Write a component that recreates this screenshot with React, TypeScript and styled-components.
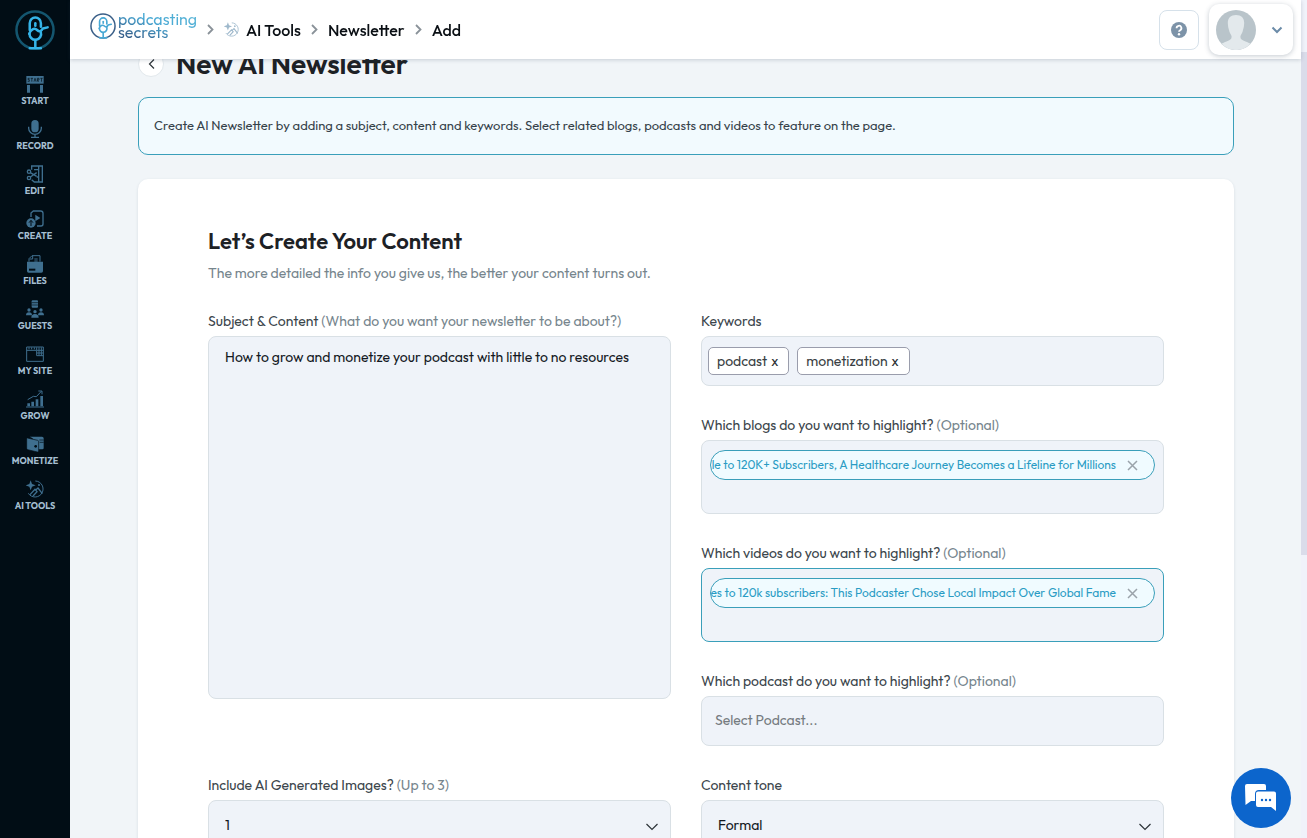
import React from "react";
import styled, { createGlobalStyle, css } from "styled-components";

const GlobalStyle = createGlobalStyle`
  *, *::before, *::after { box-sizing: border-box; }
  body { margin: 0; background: #f1f5f8; }
  body, button, input, select, textarea {
    font-family: Outfit, Lato, "Open Sans", sans-serif;
  }
  button { cursor: pointer; }
  h1, h2, p { margin: 0; }
`;

const accent = "#3a9fba";

const Shell = styled.div`
  display: grid;
  grid-template-columns: 70px minmax(0, 1fr) 6px;
  height: 100vh;
  overflow: hidden;
  color: #1d2125;
`;

/* Sidebar */

const Sidebar = styled.nav`
  display: flex;
  flex-direction: column;
  align-items: center;
  padding-top: 10px;
  background: #010d15;
`;

const SidebarLogo = styled.a`
  display: block;
  height: 40px;
  margin-bottom: 24px;
`;

const NavList = styled.ul`
  width: 100%;
  margin: 0;
  padding: 0;
  list-style: none;
`;

const NavLink = styled.a`
  display: flex;
  flex-direction: column;
  align-items: center;
  gap: 2px;
  height: 45px;
  padding-top: 1px;
  color: #a5bfd1;
  font-size: 9px;
  font-weight: 700;
  line-height: 12px;
  text-decoration: none;
  text-transform: uppercase;
  white-space: nowrap;

  svg { color: #3f6f8f; }
`;

/* Header */

const Column = styled.div`
  display: flex;
  flex-direction: column;
  min-width: 0;
  height: 100vh;
`;

const Header = styled.header`
  position: relative;
  z-index: 2;
  display: flex;
  flex: none;
  align-items: center;
  justify-content: space-between;
  height: 59px;
  padding: 0 8px 0 20px;
  background: #fff;
  box-shadow: 0 1px 4px rgba(50, 70, 90, 0.22);
`;

const HeaderSide = styled.div`
  display: flex;
  align-items: center;
  gap: 10px;
`;

const Brand = styled.a`
  display: flex;
  align-items: center;
  gap: 2px;
  padding-bottom: 8px;
  text-decoration: none;
`;

const BrandText = styled.span`
  display: flex;
  flex-direction: column;
  padding: 2px 0 1px;
  background: linear-gradient(20deg, #35608c 15%, #48a8d4 55%, #5cb8d8);
  background-clip: text;
  color: transparent;
  font-size: 16px;
  line-height: 13px;
`;

const Crumbs = styled.ol`
  display: flex;
  align-items: center;
  gap: 10px;
  margin: 0;
  padding: 0;
  list-style: none;
  font-size: 16px;
  font-weight: 500;
  line-height: 20px;

  li { display: flex; align-items: center; gap: 10px; }
`;

const CrumbLink = styled.a`
  display: flex;
  align-items: center;
  gap: 7px;
  color: #0a0f14;
  text-decoration: none;
`;

const HelpButton = styled.button`
  display: grid;
  place-items: center;
  width: 40px;
  height: 40px;
  padding: 0;
  border: 1px solid #d6e1ea;
  border-radius: 8px;
  background: #fff;
`;

const AccountButton = styled.button`
  display: flex;
  align-items: center;
  justify-content: space-between;
  width: 84px;
  height: 51px;
  padding: 0 10px 0 7px;
  border: 0;
  border-radius: 10px;
  background: #fff;
  box-shadow: 0 1px 5px rgba(60, 80, 100, 0.3);
`;

/* Page */

const Scroller = styled.main`
  flex: 1;
  min-height: 0;
  padding: 0 67px 40px 68px;
  overflow-y: auto;
  scrollbar-width: none;
  background: #f1f5f8;
`;

const TitleRow = styled.div`
  display: flex;
  align-items: center;
  gap: 12px;
  height: 36px;
  margin: -13px 0 15px;
`;

const BackButton = styled.button`
  display: grid;
  place-items: center;
  width: 26px;
  height: 26px;
  padding: 0;
  border: 1px solid #e2e8ec;
  border-radius: 50%;
  background: #fff;
`;

const PageTitle = styled.h1`
  font-size: 28px;
  font-weight: 600;
  line-height: 36px;
`;

const Notice = styled.p`
  padding: 17px 15px 19px;
  border: 1px solid ${accent};
  border-radius: 10px;
  background: #f2fafe;
  color: #36424a;
  font-size: 13px;
  line-height: 20px;
`;

const Card = styled.section`
  margin-top: 24px;
  padding: 48px 70px;
  border-radius: 10px;
  background: #fff;
  box-shadow: 0 1px 3px rgba(50, 70, 90, 0.14);
`;

const CardTitle = styled.h2`
  font-size: 22px;
  font-weight: 600;
  line-height: 28px;
`;

const CardText = styled.p`
  margin: 8px 0 28px;
  color: #76858d;
  font-size: 14px;
  line-height: 20px;
`;

const FormGrid = styled.form`
  display: grid;
  grid-template-columns: repeat(2, minmax(0, 1fr));
  gap: 29px 30px;
  align-items: start;
`;

const Stack = styled.div`
  display: grid;
  gap: 29px;
`;

const Field = styled.div`
  display: flex;
  flex-direction: column;
  gap: 5px;
  min-width: 0;
`;

const Label = styled.label`
  color: #3b454b;
  font-size: 14px;
  line-height: 20px;

  span { color: #76858d; }
`;

const boxStyle = css`
  width: 100%;
  border: 1px solid #d9e0e5;
  border-radius: 8px;
  background: #eff3f9;
  color: #14191f;
  font-size: 14px;
  line-height: 20px;
`;

const TextArea = styled.textarea`
  ${boxStyle}
  height: 363px;
  padding: 10px 16px;
  resize: none;
  outline: 0;
`;

const TextBox = styled.input`
  ${boxStyle}
  height: 50px;
  padding: 0 13px 2px;
  &::placeholder { color: #757b80; }
`;

const SelectWrap = styled.div`
  position: relative;

  svg {
    position: absolute;
    top: 22px;
    right: 12px;
    pointer-events: none;
  }
`;

const Select = styled.select`
  ${boxStyle}
  height: 50px;
  padding: 0 16px;
  appearance: none;
`;

const TagBox = styled.div`
  ${boxStyle}
  display: flex;
  align-items: center;
  gap: 8px;
  height: 50px;
  padding: 0 6px;
`;

const Tag = styled.span`
  display: flex;
  align-items: center;
  gap: 4px;
  height: 28px;
  padding: 0 10px 0 8px;
  border: 1px solid #9a9dac;
  border-radius: 5px;
  background: #fff;
  color: #3a3f44;
  white-space: nowrap;
`;

const PlainButton = styled.button`
  display: flex;
  flex: none;
  padding: 0;
  border: 0;
  background: none;
  color: #2b3034;
  font-size: 14px;
  line-height: 20px;
`;

const BareInput = styled.input`
  flex: 1;
  min-width: 0;
  padding: 0;
  border: 0;
  outline: 0;
  background: none;
  font-size: 14px;
`;

const PickerBox = styled.div<{ $active?: boolean }>`
  ${boxStyle}
  display: flex;
  flex-direction: column;
  height: 74px;
  padding: 9px 8px;
  ${(p) => p.$active && css`border-color: ${accent};`}
`;

const Pill = styled.div`
  display: flex;
  flex: none;
  align-items: center;
  justify-content: flex-end;
  gap: 11px;
  height: 30px;
  padding-right: 16px;
  overflow: hidden;
  border: 1px solid ${accent};
  border-radius: 15px;
  background: #f0fbff;
  color: #2a9cc4;
  font-size: 12px;
  white-space: nowrap;
`;

/* Overlays and scrollbar */

const Track = styled.div`
  background: #f0f2fa;
`;

const Thumb = styled.div`
  height: 60%;
  margin-top: 52px;
  background: #dadcea;
`;

const ChatButton = styled.button`
  position: fixed;
  right: 16px;
  bottom: 10px;
  z-index: 3;
  display: grid;
  place-items: center;
  width: 60px;
  height: 60px;
  padding: 0;
  border: 0;
  border-radius: 50%;
  background: #0c65cc;
`;

/* Drawings */

const MicMark = ({ size, ring, main, ringWidth }: { size: number; ring: string; main: string; ringWidth: number }) => (
  <svg width={size} height={size} viewBox="0 0 38 38" fill="none" aria-hidden="true">
    <circle cx="19" cy="19" r="17.6" stroke={ring} strokeWidth={ringWidth} />
    <g stroke={main} strokeWidth="2.400" strokeLinecap="round" strokeLinejoin="round">
      <path d="M14 19v-6.500a5.300 5.300 0 0 1 10.600 0V16" />
      <path d="M19.300 12.500v2.500" />
      <path d="M13.500 22.500c1-4 5-6 7.500-3.500s4 1 5.500-1.500l4.500-1" />
      <path d="M13.800 22.500a5.500 5.500 0 1 0 10.700-1.500" />
      <path d="M19.300 28.500V36M14 36.300h10.600" />
    </g>
  </svg>
);

const NavSvg = ({ children }: { children: React.ReactNode }) => (
  <svg width="18" height="18" viewBox="0 0 54 54" fill="none" stroke="currentColor" strokeWidth="3" aria-hidden="true">
    {children}
  </svg>
);

const StartIcon = () => (
  <NavSvg>
    <path d="M1 3h52v23H1z" fill="currentColor" stroke="none" />
    <path d="M11 10H6v4h4v5H5M14 10h7M17.500 10v10M24 20l3-10 3 10M34 20V10h5v5h-5l5 5M43 10h7M46.500 10v10" stroke="#010d15" strokeWidth="2" />
    <path d="M3 30h9v23H3zM42 30h9v23h-9z" fill="currentColor" stroke="none" />
  </NavSvg>
);
const RecordIcon = () => (
  <NavSvg>
    <rect x="16" y="0" width="22" height="37" rx="11" fill="currentColor" stroke="none" />
    <path d="M8 20v5a19 18 0 0 0 38 0v-5M27 43v9M15 52h24" strokeWidth="4" />
  </NavSvg>
);
const EditIcon = () => (
  <NavSvg>
    <path d="M17 14V3h32v48H25l-8-7M38 3v48M24 14h14M32 36h6" strokeWidth="4" />
    <circle cx="9" cy="20" r="5" strokeWidth="4" />
    <circle cx="9" cy="39" r="5" strokeWidth="4" />
    <path d="M13 23l19 11M13 36l19-13" strokeWidth="4" />
  </NavSvg>
);
const CreateIcon = () => (
  <NavSvg>
    <path d="M15 21V9l7-6h22q7 0 7 7v32q0 6-6 6H33" strokeWidth="4" />
    <path d="M28 14l15 10-15 10z" fill="currentColor" stroke="none" />
    <circle cx="15" cy="39" r="14" fill="currentColor" stroke="none" />
    <path d="M15 48V32M9 38l6-7 6 7" stroke="#010d15" />
  </NavSvg>
);
const FilesIcon = () => (
  <NavSvg>
    <path d="M3 20h48v28q0 5-5 5H8q-5 0-5-5z" fill="currentColor" stroke="none" />
    <path d="M9 20v-9l9-9h24v18M20 3v9h-9M25 12h10M25 18h10" />
    <path d="M9 41h19v6H9z" fill="#010d15" stroke="none" />
  </NavSvg>
);
const GuestsIcon = () => (
  <NavSvg>
    <g fill="currentColor" stroke="none">
      <rect x="17" y="1" width="19" height="22" rx="3" />
      <circle cx="9" cy="30" r="5" />
      <circle cx="45" cy="30" r="5" />
      <circle cx="27" cy="35" r="5" />
      <path d="M0 46q0-9 9-9t9 9zM36 46q0-9 9-9t9 9zM16 53q0-11 11-11t11 11z" />
    </g>
    <path d="M17 8h19M17 15h19" stroke="#010d15" strokeWidth="2" />
  </NavSvg>
);
const SiteIcon = () => (
  <NavSvg>
    <path d="M2 6h50v43H2zM2 16h28M9 7v6M17 7v6M25 7v6M32 7v25h20M32 16h20M32 24h20M39 7v25M46 7v25" />
  </NavSvg>
);
const GrowIcon = () => (
  <NavSvg>
    <path d="M0 51h54" />
    <path d="M4 40h8v9H4zM16 35h8v14h-8zM29 28h8v21h-8zM43 18h8v31h-8z" fill="currentColor" stroke="none" />
    <path d="M5 29l17-10 9 1L46 4M37 3h11v10" />
  </NavSvg>
);
const MonetizeIcon = () => (
  <NavSvg>
    <path d="M11 5h37q5 0 5 5v30q0 3-4 3H20V10z" fill="currentColor" stroke="none" />
    <path d="M4 9l31 7q3 1 3 4v28q0 4-4 3L5 44q-3-1-3-4V11z" fill="currentColor" stroke="#010d15" strokeWidth="2" strokeLinejoin="round" />
    <path d="M40 15h13M41 22h12" stroke="#010d15" strokeWidth="2" />
    <circle cx="29" cy="34" r="4" fill="#010d15" stroke="none" />
  </NavSvg>
);
const AiShapes = () => (
  <>
    <path d="M28 3a24 24 0 1 1-21 37" />
    <path d="M14 1l4 11 11 4-11 4-4 11-4-11-11-4 11-4z" fill="currentColor" stroke="none" />
    <path d="M12 44l15-16 6 7-12 13M30 29l6-5 13 17" strokeWidth="4" />
    <circle cx="39" cy="15" r="3" fill="currentColor" stroke="none" />
  </>
);

const navItems: [string, () => React.JSX.Element][] = [
  ["Start", StartIcon],
  ["Record", RecordIcon],
  ["Edit", EditIcon],
  ["Create", CreateIcon],
  ["Files", FilesIcon],
  ["Guests", GuestsIcon],
  ["My Site", SiteIcon],
  ["Grow", GrowIcon],
  ["Monetize", MonetizeIcon],
  ["AI Tools", () => <NavSvg><AiShapes /></NavSvg>],
];

const CrumbArrow = () => (
  <svg width="7" height="11" viewBox="0 0 7 11" fill="none" stroke="#8a9299" strokeWidth="1.800" aria-hidden="true">
    <path d="M1 1l4.500 4.500L1 10" />
  </svg>
);

const SelectArrow = () => (
  <svg width="14" height="10" viewBox="0 0 14 10" fill="none" stroke="#2c3338" strokeWidth="1.200" aria-hidden="true">
    <path d="M1.500 2L7 7.500l5.500-5.500" />
  </svg>
);

const CloseMark = () => (
  <svg width="11" height="11" viewBox="0 0 11 11" fill="none" stroke="#9aa3aa" strokeWidth="1.500" aria-hidden="true">
    <path d="M1 1l9 9M10 1l-9 9" />
  </svg>
);

const Picker = ({ id, topic, item, active }: { id: string; topic: string; item: string; active?: boolean }) => (
  <Field>
    <Label htmlFor={id}>Which {topic} do you want to highlight? <span>(Optional)</span></Label>
    <PickerBox $active={active}>
      <Pill>
        {item}
        <PlainButton type="button" aria-label="Remove"><CloseMark /></PlainButton>
      </Pill>
      <BareInput id={id} />
    </PickerBox>
  </Field>
);

export default function App() {
  return (
    <>
      <GlobalStyle />
      <Shell>
        <Sidebar aria-label="Main">
          <SidebarLogo href="#" aria-label="Home">
            <MicMark size={40} ring="#14566f" main="#35b4e8" ringWidth={2.4} />
          </SidebarLogo>
          <NavList>
            {navItems.map(([name, Icon]) => (
              <li key={name}>
                <NavLink href="#"><Icon />{name}</NavLink>
              </li>
            ))}
          </NavList>
        </Sidebar>

        <Column>
          <Header>
            <HeaderSide>
              <Brand href="#">
                <MicMark size={26} ring="#3a5f88" main="#48a8d4" ringWidth={2.2} />
                <BrandText>
                  <span>podcasting</span>
                  <span>secrets</span>
                </BrandText>
              </Brand>
              <Crumbs>
                <li>
                  <CrumbArrow />
                  <CrumbLink href="#">
                    <svg width="15" height="15" viewBox="0 0 54 54" fill="none" stroke="#9fb9cc" strokeWidth="3" color="#9fb9cc" aria-hidden="true">
                      <AiShapes />
                    </svg>
                    AI Tools
                  </CrumbLink>
                </li>
                <li><CrumbArrow /><CrumbLink href="#">Newsletter</CrumbLink></li>
                <li><CrumbArrow /><CrumbLink href="#">Add</CrumbLink></li>
              </Crumbs>
            </HeaderSide>
            <HeaderSide>
              <HelpButton aria-label="Help">
                <svg width="16" height="16" viewBox="0 0 16 16" fill="none" aria-hidden="true">
                  <circle cx="8" cy="8" r="8" fill="#7d93a8" />
                  <path d="M5.600 6.200a2.400 2.400 0 1 1 3.600 2C8.300 8.700 8 9 8 9.800" stroke="#fff" strokeWidth="1.800" />
                  <circle cx="8" cy="12.200" r="1.200" fill="#fff" />
                </svg>
              </HelpButton>
              <AccountButton aria-label="Account">
                <svg width="40" height="40" viewBox="0 0 40 40" aria-hidden="true">
                  <circle cx="20" cy="20" r="20" fill="#b9c4ca" />
                  <path d="M20 5c-6 0-9 4-8 10 0 2 .5 3 1 5 .5 3 2 4 2.500 6 .5 3-1 4-5 5.500-2 .8-4 1.500-5 2.300A20 20 0 0 0 34.500 33.800c-1-.8-3-1.500-5-2.300-4-1.500-5.500-2.500-5-5.500.5-2 2-3 2.500-6 .5-2 1-3 1-5 1-6-2-10-8-10z" fill="#e3e9ec" />
                </svg>
                <svg width="12" height="8" viewBox="0 0 12 8" fill="none" stroke="#6b8ba8" strokeWidth="2" aria-hidden="true">
                  <path d="M1.500 1.500L6 6l4.500-4.500" />
                </svg>
              </AccountButton>
            </HeaderSide>
          </Header>

          <Scroller>
            <TitleRow>
              <BackButton aria-label="Back">
                <svg width="7" height="12" viewBox="0 0 7 12" fill="none" stroke="#2c3338" strokeWidth="1.200" aria-hidden="true">
                  <path d="M6 1.500L1.500 6 6 10.500" />
                </svg>
              </BackButton>
              <PageTitle>New AI Newsletter</PageTitle>
            </TitleRow>
            <Notice>
              Create AI Newsletter by adding a subject, content and keywords. Select related blogs, podcasts and videos to feature on the page.
            </Notice>

            <Card>
              <CardTitle>Let’s Create Your Content</CardTitle>
              <CardText>The more detailed the info you give us, the better your content turns out.</CardText>
              <FormGrid>
                <Field>
                  <Label htmlFor="subject">Subject &amp; Content <span>(What do you want your newsletter to be about?)</span></Label>
                  <TextArea id="subject" defaultValue="How to grow and monetize your podcast with little to no resources" />
                </Field>
                <Stack>
                  <Field>
                    <Label htmlFor="keywords">Keywords</Label>
                    <TagBox>
                      {["podcast", "monetization"].map((word) => (
                        <Tag key={word}>
                          {word}
                          <PlainButton type="button" aria-label={`Remove ${word}`}>x</PlainButton>
                        </Tag>
                      ))}
                      <BareInput id="keywords" />
                    </TagBox>
                  </Field>
                  <Picker id="blogs" topic="blogs" item="le to 120K+ Subscribers, A Healthcare Journey Becomes a Lifeline for Millions" />
                  <Picker id="videos" topic="videos" active item="es to 120k subscribers: This Podcaster Chose Local Impact Over Global Fame" />
                  <Field>
                    <Label htmlFor="podcast">Which podcast do you want to highlight? <span>(Optional)</span></Label>
                    <TextBox id="podcast" placeholder="Select Podcast..." />
                  </Field>
                </Stack>
                <Field>
                  <Label htmlFor="images">Include AI Generated Images? <span>(Up to 3)</span></Label>
                  <SelectWrap>
                    <Select id="images"><option>1</option><option>2</option><option>3</option></Select>
                    <SelectArrow />
                  </SelectWrap>
                </Field>
                <Field>
                  <Label htmlFor="tone">Content tone</Label>
                  <SelectWrap>
                    <Select id="tone"><option>Formal</option></Select>
                    <SelectArrow />
                  </SelectWrap>
                </Field>
              </FormGrid>
            </Card>
          </Scroller>
        </Column>

        <Track><Thumb /></Track>
      </Shell>
      <ChatButton aria-label="Open chat">
        <svg width="32" height="28" viewBox="0 0 32 28" aria-hidden="true">
          <path d="M2 0h17q2 0 2 2v4h-7q-4 0-4 4v7H6l-5.500 4L0 2q0-2 2-2z" fill="#fff" />
          <path d="M13 7.500h16q2 0 2 2V27l-5-4H13q-2 0-2-2V9.500q0-2 2-2z" fill="#fff" />
          <g fill="#0c65cc"><circle cx="17" cy="16" r="1.200" /><circle cx="21" cy="16" r="1.200" /><circle cx="25" cy="16" r="1.200" /></g>
        </svg>
      </ChatButton>
    </>
  );
}
